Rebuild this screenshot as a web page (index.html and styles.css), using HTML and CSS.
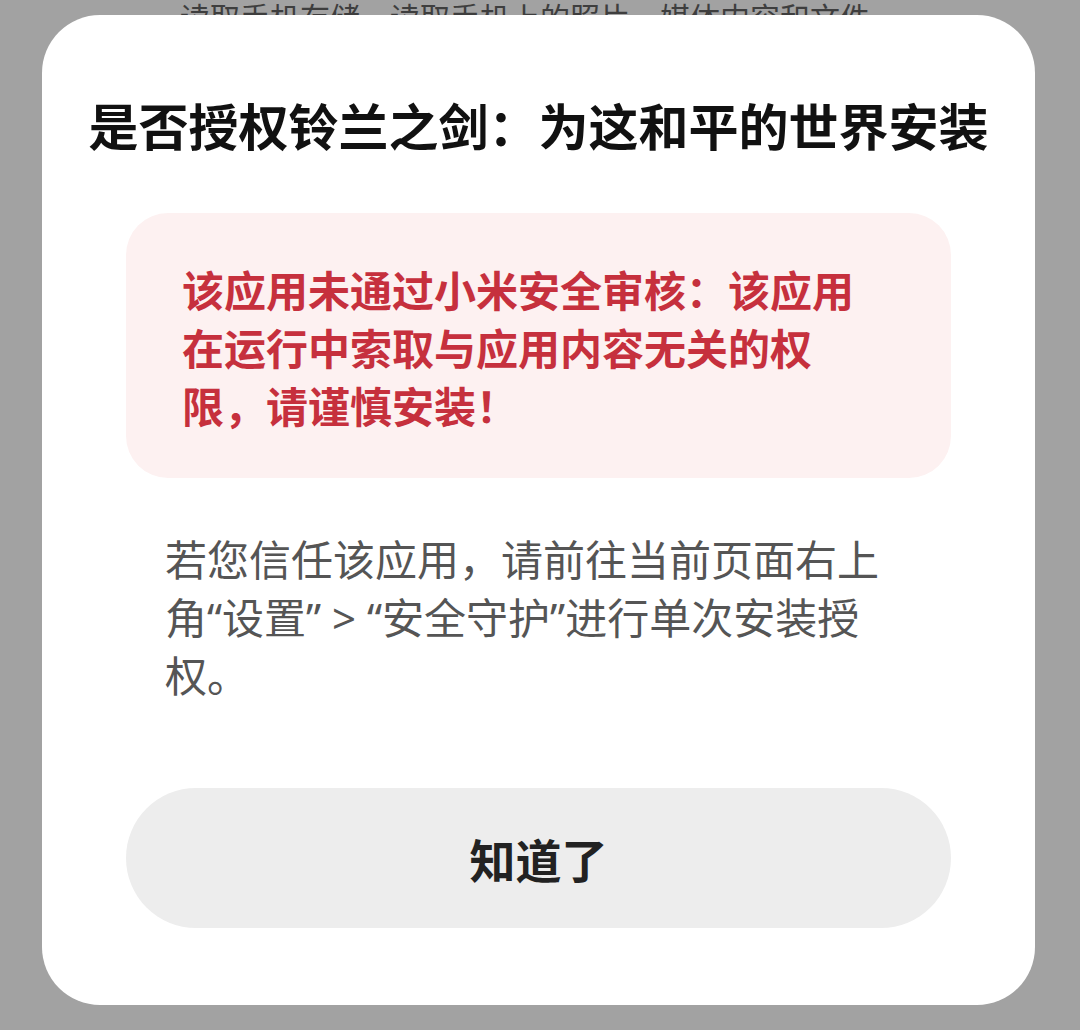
FILE: index.html
```html
<!DOCTYPE html>
<html lang="zh-CN">
<head>
<meta charset="utf-8">
<title>安装授权</title>
<link rel="stylesheet" href="styles.css">
</head>
<body>
<div class="backdrop">
  <p class="behind-text">读取手机存储，读取手机上的照片、媒体内容和文件</p>
</div>
<div class="dialog">
  <h1 class="title">是否授权铃兰之剑：为这和平的世界安装</h1>
  <div class="warning">
    <p class="warning-text">该应用未通过小米安全审核：该应用<br>在运行中索取与应用内容无关的权<br>限，请谨慎安装！</p>
  </div>
  <p class="body-text">若您信任该应用，请前往当前页面右上<br>角“设置” &gt; “安全守护”进行单次安装授<br>权。</p>
  <div class="button">知道了</div>
</div>
</body>
</html>
```

FILE: styles.css
```css
html, body {
  margin: 0;
  padding: 0;
}
body {
  width: 1080px;
  height: 1030px;
  background: #a2a2a2;
  font-family: "Noto Sans", "Noto Sans CJK SC", sans-serif;
  position: relative;
  overflow: hidden;
}
.backdrop {
  padding-left: 180px;
}
.behind-text {
  margin: 0;
  font-size: 30px;
  line-height: 40px;
  color: #3e3e3e;
  white-space: nowrap;
  position: relative;
  top: -2px;
}
.dialog {
  position: absolute;
  left: 42px;
  top: 15px;
  width: 993px;
  height: 990px;
  box-sizing: border-box;
  background: #ffffff;
  border-radius: 58px;
  padding: 79px 84px 0 84px;
  display: flex;
  flex-direction: column;
}
.title {
  margin: 0 -50px;
  font-size: 50px;
  line-height: 60px;
  font-weight: 700;
  color: #111111;
  text-align: center;
  white-space: nowrap;
  font-family: "Noto Sans CJK SC", sans-serif;
}
.warning {
  margin-top: 59px;
  height: 265px;
  box-sizing: border-box;
  background: #fdf1f1;
  border-radius: 42px;
  padding: 47px 40px 0 56px;
}
.warning-text {
  margin: 0;
  font-size: 42px;
  line-height: 58px;
  font-weight: 700;
  color: #c6303d;
  white-space: nowrap;
  font-family: "Noto Sans CJK SC", sans-serif;
}
.body-text {
  margin: 53px 0 0 39px;
  font-size: 42px;
  line-height: 58px;
  color: #555555;
  white-space: nowrap;
}
.button {
  margin-top: 83px;
  height: 140px;
  border-radius: 70px;
  background: #ededed;
  display: flex;
  align-items: center;
  justify-content: center;
  font-family: "Noto Sans CJK SC", sans-serif;
  font-size: 46px;
  font-weight: 700;
  color: #222222;
}
```
